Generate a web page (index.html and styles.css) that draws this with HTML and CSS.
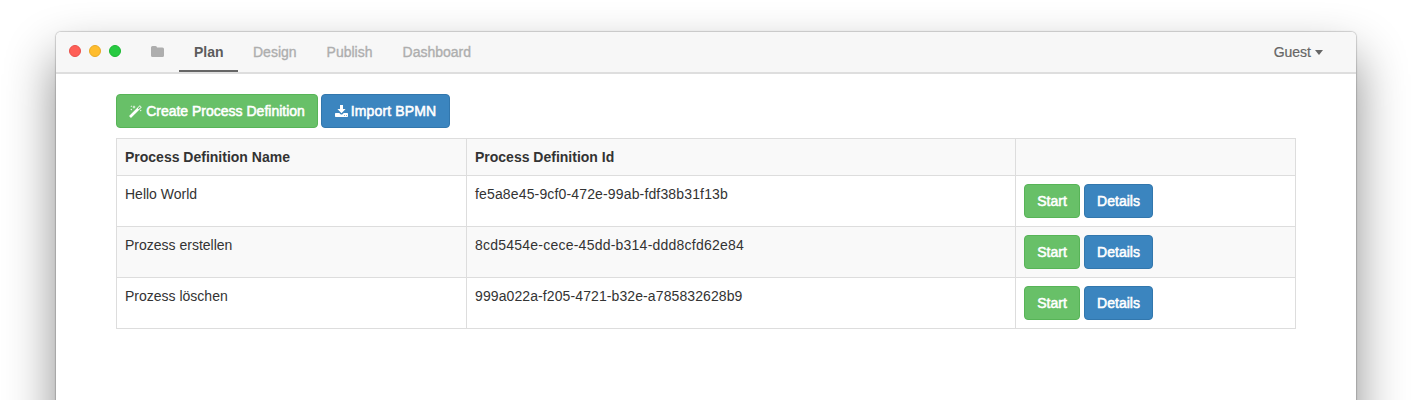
FILE: index.html
```html
<!DOCTYPE html>
<html lang="en">
<head>
<meta charset="utf-8">
<title>Process definitions</title>
<link rel="stylesheet" href="styles.css">
</head>
<body>
<div class="window">
  <header class="titlebar">
    <div class="lights"><i class="light red"></i><i class="light yellow"></i><i class="light green"></i></div>
    <nav class="tabs">
      <a class="tab folder"><svg width="13" height="11" viewBox="0 0 13 11"><path fill="currentColor" d="M0 1.5Q0 0 1.5 0H4.5Q6 0 6 1.6H11.5Q13 1.6 13 3.1V9.5Q13 11 11.5 11H1.5Q0 11 0 9.5Z"/></svg></a>
      <a class="tab active">Plan</a>
      <a class="tab">Design</a>
      <a class="tab">Publish</a>
      <a class="tab">Dashboard</a>
    </nav>
    <div class="user">Guest<i class="caret"></i></div>
  </header>
  <main class="content">
    <div class="toolbar">
      <button class="btn success create"><svg width="13" height="13" viewBox="0 0 13 13"><path d="M1 12L11.8 1.2" stroke="#fff" stroke-width="2.7"/><path d="M8.8 3.3L9.7 4.2L11.8 2.1L10.9 1.2Z" fill="#68c068"/><path d="M2.3 .2L2.6 .9L3.3 1.2L2.6 1.5L2.3 2.2L2 1.5L1.3 1.2L2 .9ZM5 .3L5.5 1.6L6.8 2.1L5.5 2.6L5 3.9L4.5 2.6L3.2 2.1L4.5 1.6ZM2.3 3.6L2.6 4.3L3.3 4.6L2.6 4.9L2.3 5.6L2 4.9L1.3 4.6L2 4.3ZM11.7 4.6L12 5.3L12.7 5.6L12 5.9L11.7 6.6L11.4 5.9L10.7 5.6L11.4 5.3Z" fill="#fff"/></svg><span>Create Process Definition</span></button>
      <button class="btn primary import"><svg width="13" height="12" viewBox="0 0 13 12"><path fill="#fff" d="M5 0H8V4H10.6L6.5 8.2L2.4 4H5Z"/><path fill="#fff" fill-rule="evenodd" d="M0 8.7Q0 8 .7 8H4.3L5.5 9.2Q6.5 10 7.5 9.2L8.7 8H12.3Q13 8 13 8.7V11.3Q13 12 12.3 12H.7Q0 12 0 11.3ZM9 10V10.8H9.8V10ZM11 10V10.8H11.8V10Z"/></svg><span>Import BPMN</span></button>
    </div>
    <table class="grid">
      <colgroup><col class="c-name"><col class="c-id"><col class="c-actions"></colgroup>
      <thead><tr><th>Process Definition Name</th><th>Process Definition Id</th><th></th></tr></thead>
      <tbody>
        <tr><td>Hello World</td><td class="id-a">fe5a8e45-9cf0-472e-99ab-fdf38b31f13b</td><td><div class="actions"><button class="btn success start">Start</button><button class="btn primary details">Details</button></div></td></tr>
        <tr><td>Prozess erstellen</td><td class="id-b">8cd5454e-cece-45dd-b314-ddd8cfd62e84</td><td><div class="actions"><button class="btn success start">Start</button><button class="btn primary details">Details</button></div></td></tr>
        <tr><td>Prozess löschen</td><td class="id-c">999a022a-f205-4721-b32e-a785832628b9</td><td><div class="actions"><button class="btn success start">Start</button><button class="btn primary details">Details</button></div></td></tr>
      </tbody>
    </table>
  </main>
</div>
</body>
</html>
```
FILE: styles.css
```css
* { box-sizing: border-box; }
html { overflow: hidden; }
body {
  margin: 0;
  height: 400px;
  padding: 32px 56px 0;
  overflow: hidden;
  background: #fff;
  color: #333;
  font: 14px/20px "Liberation Sans", Arial, sans-serif;
}
.window {
  height: 440px;
  border-radius: 5px 5px 0 0;
  background: #fff;
  box-shadow: 0 0 1px 1px rgba(0,0,0,.17), 0 25px 50px rgba(0,0,0,.46);
}
.titlebar {
  display: flex;
  height: 42px;
  padding: 0 33px 0 13px;
  border-bottom: 2px solid #dedede;
  border-radius: 5px 5px 0 0;
  background: #f7f7f7;
}
.lights { display: flex; gap: 8px; width: 67px; padding-top: 13px; }
.light { width: 12px; height: 12px; border: 1px solid; border-radius: 50%; }
.red { background: #ff5f57; border-color: #e9504a; }
.yellow { background: #ffbd2e; border-color: #e8aa25; }
.green { background: #28ca42; border-color: #1bb932; }
.tabs { display: flex; flex: 1; }
.tab {
  height: 40px;
  padding: 10px 15px 0;
  color: #aeaeae;
  -webkit-text-stroke: .35px;
}
.folder { width: 43px; padding-top: 14px; line-height: 0; }
.active {
  width: 59px;
  border-bottom: 2px solid #666;
  color: #5c5c5c;
  font-weight: bold;
  -webkit-text-stroke: 0;
}
.user { display: flex; padding-top: 10px; color: #666; -webkit-text-stroke: .2px; }
.caret { margin: 8px 0 0 4px; width: 8px; height: 5px; background: #666; clip-path: polygon(0 0, 100% 0, 50% 100%); }
.content { padding: 20px 60px; }
.toolbar { display: flex; gap: 3px; margin-bottom: 10px; }
.btn {
  display: flex;
  align-items: center;
  justify-content: center;
  height: 34px;
  padding: 0;
  border: 1px solid;
  border-radius: 4px;
  color: #fff;
  font: inherit;
  letter-spacing: 0;
  white-space: nowrap;
  -webkit-text-stroke: .55px;
}
.btn svg { margin-right: 4px; }
.success { background: #68c068; border-color: #57b457; }
.primary { background: #3b85bf; border-color: #3277ad; }
.create { width: 202px; }
.import { width: 129px; letter-spacing: .15px; }
.import svg { margin-right: 3px; }
.start { width: 56px; }
.details { width: 69px; }
.grid { width: 1180px; table-layout: fixed; border-collapse: collapse; }
.c-name { width: 350px; }
.c-id { width: 549px; }
.grid th, .grid td { padding: 8px; border: 1px solid #ddd; text-align: left; vertical-align: top; }
.grid th { height: 37px; background: #f9f9f9; }
.grid td { height: 51px; }
.grid tbody tr:nth-child(even) { background: #f9f9f9; }
.grid .id-a { letter-spacing: .15px; }
.grid .id-b { letter-spacing: .23px; }
.grid .id-c { letter-spacing: .1px; }
.actions { display: flex; gap: 4px; }
```
